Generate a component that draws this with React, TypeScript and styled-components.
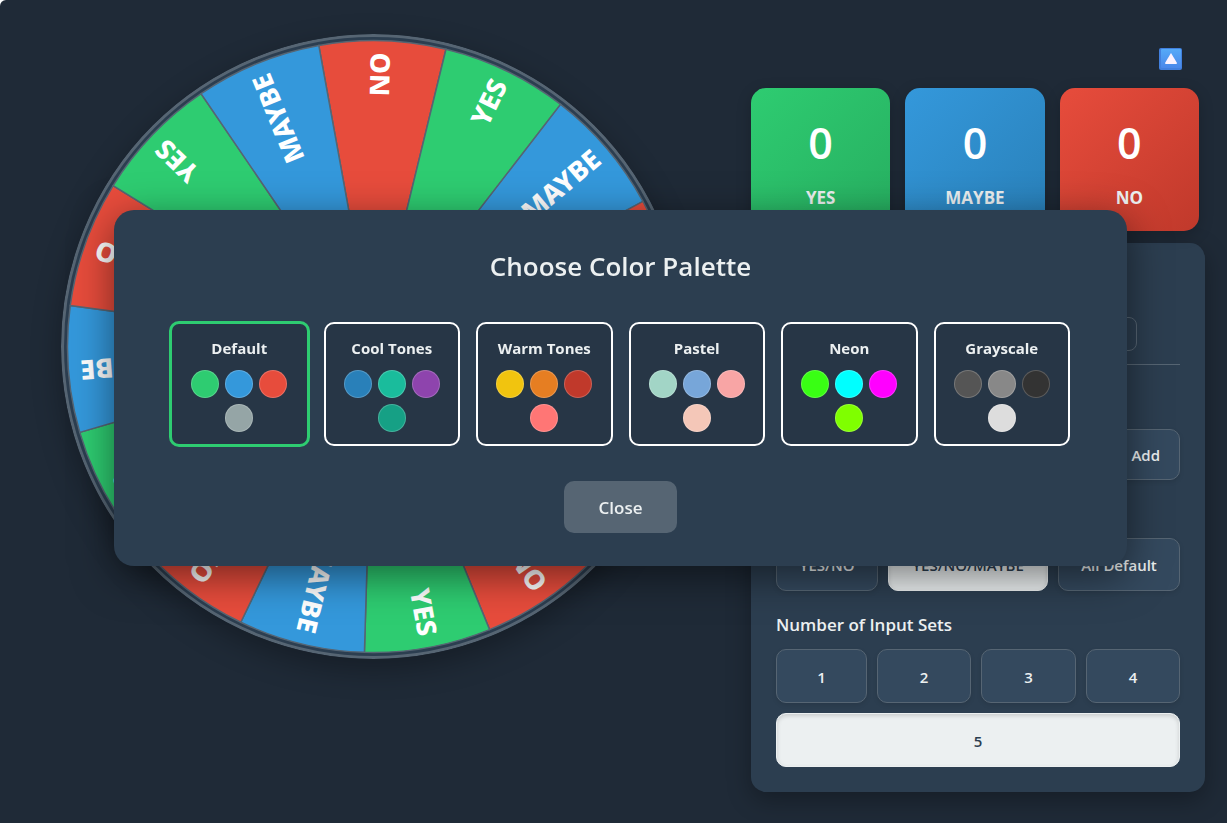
import React, { useState } from "react";
import styled, { createGlobalStyle, css } from "styled-components";

const GlobalStyle = createGlobalStyle`
  *, *::before, *::after { box-sizing: border-box; }
  html { background: #ffffff; }
  body {
    margin: 0;
    color: #ecf0f1;
    font-family: "Open Sans", "Noto Sans", sans-serif;
  }
  button, input { font-family: inherit; }
`;

const Page = styled.main`
  display: flex;
  gap: 4px;
  min-height: 100vh;
  padding-right: 22px;
  border-top-left-radius: 6px;
  background: #1f2a37;
`;

const WheelArea = styled.section`
  flex: 1;
  min-width: 0;
  display: flex;
  justify-content: center;
  align-items: flex-start;
  padding-top: 34px;
`;

const WheelSvg = styled.svg`
  display: block;
  width: 100%;
  max-width: 625px;
  height: auto;
  border-radius: 50%;
  box-shadow: 0 10px 30px rgba(0, 0, 0, 0.3);

  text {
    font-family: "Noto Sans", "Open Sans", sans-serif;
    font-size: 27px;
    font-weight: 800;
    fill: #ffffff;
    text-anchor: end;
  }
`;

const Sidebar = styled.aside`
  width: 454px;
  flex: none;
  padding-top: 48px;
`;

const TopRow = styled.div`
  display: flex;
  justify-content: flex-end;
  padding-right: 23px;
  margin-bottom: 17px;
`;

const ToggleButton = styled.button`
  width: 23px;
  height: 23px;
  padding: 0;
  border: 0;
  background: none;
  cursor: pointer;

  svg { display: block; }
`;

const Scores = styled.div`
  display: grid;
  grid-template-columns: repeat(3, 1fr);
  gap: 15px;
  padding-right: 6px;
  margin-bottom: 12px;
`;

const ScoreCard = styled.div<{ $from: string; $to: string }>`
  display: flex;
  flex-direction: column;
  align-items: center;
  height: 143px;
  padding-top: 25px;
  border-radius: 15px;
  background: linear-gradient(135deg, ${(p) => p.$from}, ${(p) => p.$to});
  box-shadow: 0 4px 15px rgba(0, 0, 0, 0.2);
`;

const ScoreValue = styled.span`
  font-size: 43px;
  line-height: 60px;
  font-weight: 600;
  color: #ffffff;
`;

const ScoreLabel = styled.span`
  margin-top: 13px;
  font-size: 17px;
  line-height: 24px;
  font-weight: 700;
`;

const Panel = styled.section`
  padding: 25px;
  border-radius: 15px;
  background: #2c3e50;
  box-shadow: 0 8px 25px rgba(0, 0, 0, 0.3);
`;

const FieldRow = styled.div`
  display: flex;
  justify-content: flex-end;
  padding: 49px 43px 13px 0;
  border-bottom: 1px solid #566573;
`;

const TextField = styled.input`
  width: 160px;
  height: 34px;
  border: 1px solid #566573;
  border-radius: 8px;
  background: transparent;
  color: #ecf0f1;
`;

const AddRow = styled.div`
  display: flex;
  justify-content: flex-end;
  margin-top: 64px;
`;

const ModeRow = styled.div`
  display: grid;
  grid-template-columns: 102fr 160fr 122fr;
  gap: 10px;
  margin-top: 58px;
`;

const PanelButton = styled.button<{ $active?: boolean; $wide?: boolean }>`
  height: 54px;
  padding: 1px 19px 0;
  border: 1px solid #566573;
  border-radius: 10px;
  background: #34495e;
  color: #ecf0f1;
  font-size: 15px;
  font-weight: 600;
  white-space: nowrap;
  box-shadow: 0 2px 5px rgba(0, 0, 0, 0.1);
  cursor: pointer;
  ${(p) => p.$wide && css`grid-column: 1 / -1;`}
  ${(p) =>
    p.$active &&
    css`
      border-color: #ecf0f1;
      background: #ecf0f1;
      color: #2c3e50;
      box-shadow: inset 0 2px 4px rgba(0, 0, 0, 0.15);
    `}
`;

const AddButton = styled(PanelButton)`
  height: 51px;
`;

const ModeButton = styled(PanelButton)`
  height: 53px;
  padding: 0;
`;

const SetsHeading = styled.h2`
  margin: 22px 0 12px;
  font-size: 17px;
  line-height: 24px;
  font-weight: 600;
`;

const SetsGrid = styled.div`
  display: grid;
  grid-template-columns: 91fr 94fr 95fr 94fr;
  gap: 10px;
`;

const Overlay = styled.div`
  position: fixed;
  inset: 0;
  display: flex;
  justify-content: center;
  align-items: flex-start;
  padding: 210px 0 0 14px;
`;

const Modal = styled.div`
  width: 90%;
  max-width: 1013px;
  padding: 37px 57px 33px;
  border-radius: 20px;
  background: #2c3e50;
  box-shadow: 0 10px 40px rgba(0, 0, 0, 0.5);
  text-align: center;
`;

const ModalTitle = styled.h1`
  margin: 0 0 37px;
  font-size: 26px;
  line-height: 38px;
  font-weight: 600;
`;

const PaletteGrid = styled.div`
  display: grid;
  grid-template-columns: repeat(6, 1fr);
  gap: 16px;
  margin-bottom: 35px;
`;

const PaletteCard = styled.button<{ $selected: boolean }>`
  display: flex;
  flex-direction: column;
  align-items: center;
  padding: 12px 0;
  border: 2px solid #ffffff;
  border-radius: 10px;
  background: #273646;
  color: #ecf0f1;
  cursor: pointer;
  ${(p) =>
    p.$selected &&
    css`
      margin: -1px -2px;
      border: 3px solid #2ecc71;
    `}
`;

const PaletteName = styled.span`
  margin-bottom: 10px;
  font-size: 15px;
  line-height: 24px;
  font-weight: 700;
`;

const Swatches = styled.span`
  display: flex;
  flex-wrap: wrap;
  justify-content: center;
  gap: 6px;
  width: 108px;
`;

const Swatch = styled.span<{ $color: string }>`
  width: 28px;
  height: 28px;
  border: 1px solid rgba(255, 255, 255, 0.2);
  border-radius: 50%;
  background: ${(p) => p.$color};
`;

const CloseButton = styled.button`
  width: 113px;
  height: 52px;
  border: 0;
  border-radius: 10px;
  background: #566573;
  color: #ecf0f1;
  font-size: 17px;
  font-weight: 600;
  cursor: pointer;
`;

const SLICES = [
  { label: "NO", color: "#e74c3c" },
  { label: "YES", color: "#2ecc71" },
  { label: "MAYBE", color: "#3498db" },
];
const COUNT = 15;
const STEP = 360 / COUNT;
const ROTATION = -10.3;
const CENTER = 312.5;
const RADIUS = 306;

const rad = (deg: number) => (deg * Math.PI) / 180;
const rim = (deg: number) =>
  `${CENTER + RADIUS * Math.sin(rad(deg))} ${CENTER - RADIUS * Math.cos(rad(deg))}`;

function Wheel() {
  return (
    <WheelSvg viewBox="0 0 625 625" role="img" aria-label="Decision wheel">
      <circle cx={CENTER} cy={CENTER} r="311" fill="#2c3e50" stroke="#566573" strokeWidth="3" />
      {Array.from({ length: COUNT }, (_, i) => {
        const start = ROTATION + i * STEP;
        const slice = SLICES[i % SLICES.length];
        return (
          <g key={i}>
            <path
              d={`M${CENTER} ${CENTER} L${rim(start)} A${RADIUS} ${RADIUS} 0 0 1 ${rim(start + STEP)} Z`}
              fill={slice.color}
              stroke="#566573"
              strokeWidth="1.5"
            />
            <text
              x={CENTER + 294}
              y={CENTER + 8}
              transform={`rotate(${start + STEP / 2 - 90} ${CENTER} ${CENTER})`}
            >
              {slice.label}
            </text>
          </g>
        );
      })}
    </WheelSvg>
  );
}

const SCORES = [
  { label: "YES", from: "#2ecc71", to: "#27ae60" },
  { label: "MAYBE", from: "#3498db", to: "#2980b9" },
  { label: "NO", from: "#e74c3c", to: "#c0392b" },
];

const PALETTES = [
  { name: "Default", colors: ["#2ecc71", "#3498db", "#e74c3c", "#95a5a6"] },
  { name: "Cool Tones", colors: ["#2980b9", "#1abc9c", "#8e44ad", "#16a085"] },
  { name: "Warm Tones", colors: ["#f1c40f", "#e67e22", "#c0392b", "#ff7675"] },
  { name: "Pastel", colors: ["#a2d5c6", "#77a6d9", "#f8a5a5", "#f4c7b8"] },
  { name: "Neon", colors: ["#39ff14", "#00ffff", "#ff00ff", "#7fff00"] },
  { name: "Grayscale", colors: ["#555555", "#888888", "#333333", "#dddddd"] },
];

const MODES = ["YES/NO", "YES/NO/MAYBE", "All Default"];

export default function App() {
  const [palette, setPalette] = useState("Default");
  const [open, setOpen] = useState(true);
  const [mode, setMode] = useState("YES/NO/MAYBE");
  const [sets, setSets] = useState(5);

  return (
    <>
      <GlobalStyle />
      <Page>
        <WheelArea>
          <Wheel />
        </WheelArea>
        <Sidebar>
          <TopRow>
            <ToggleButton type="button" aria-label="Collapse">
              <svg width="23" height="23" viewBox="0 0 23 23">
                <defs>
                  <linearGradient id="key" x1="0" y1="0" x2="0" y2="1">
                    <stop offset="0" stopColor="#55aaf8" />
                    <stop offset="1" stopColor="#4a88ea" />
                  </linearGradient>
                </defs>
                <rect width="23" height="22" rx="2" fill="#4280de" />
                <rect x="2" y="1" width="20" height="19" rx="1" fill="url(#key)" />
                <path d="M12 5 L18 15 Q18 16 17 16 H7 Q6 16 6 15 Z" fill="#fbf3ff" />
              </svg>
            </ToggleButton>
          </TopRow>
          <Scores>
            {SCORES.map((s) => (
              <ScoreCard key={s.label} $from={s.from} $to={s.to}>
                <ScoreValue>0</ScoreValue>
                <ScoreLabel>{s.label}</ScoreLabel>
              </ScoreCard>
            ))}
          </Scores>
          <Panel>
            <FieldRow>
              <TextField aria-label="Title" />
            </FieldRow>
            <AddRow>
              <AddButton type="button">Add</AddButton>
            </AddRow>
            <ModeRow>
              {MODES.map((m) => (
                <ModeButton key={m} type="button" $active={m === mode} onClick={() => setMode(m)}>
                  {m}
                </ModeButton>
              ))}
            </ModeRow>
            <SetsHeading>Number of Input Sets</SetsHeading>
            <SetsGrid>
              {[1, 2, 3, 4, 5].map((n) => (
                <PanelButton
                  key={n}
                  type="button"
                  $active={n === sets}
                  $wide={n === 5}
                  onClick={() => setSets(n)}
                >
                  {n}
                </PanelButton>
              ))}
            </SetsGrid>
          </Panel>
        </Sidebar>
      </Page>
      {open && (
        <Overlay>
          <Modal role="dialog" aria-modal="true" aria-labelledby="palette-title">
            <ModalTitle id="palette-title">Choose Color Palette</ModalTitle>
            <PaletteGrid>
              {PALETTES.map((p) => (
                <PaletteCard
                  key={p.name}
                  type="button"
                  $selected={p.name === palette}
                  aria-pressed={p.name === palette}
                  onClick={() => setPalette(p.name)}
                >
                  <PaletteName>{p.name}</PaletteName>
                  <Swatches>
                    {p.colors.map((c) => (
                      <Swatch key={c} $color={c} />
                    ))}
                  </Swatches>
                </PaletteCard>
              ))}
            </PaletteGrid>
            <CloseButton type="button" onClick={() => setOpen(false)}>
              Close
            </CloseButton>
          </Modal>
        </Overlay>
      )}
    </>
  );
}
